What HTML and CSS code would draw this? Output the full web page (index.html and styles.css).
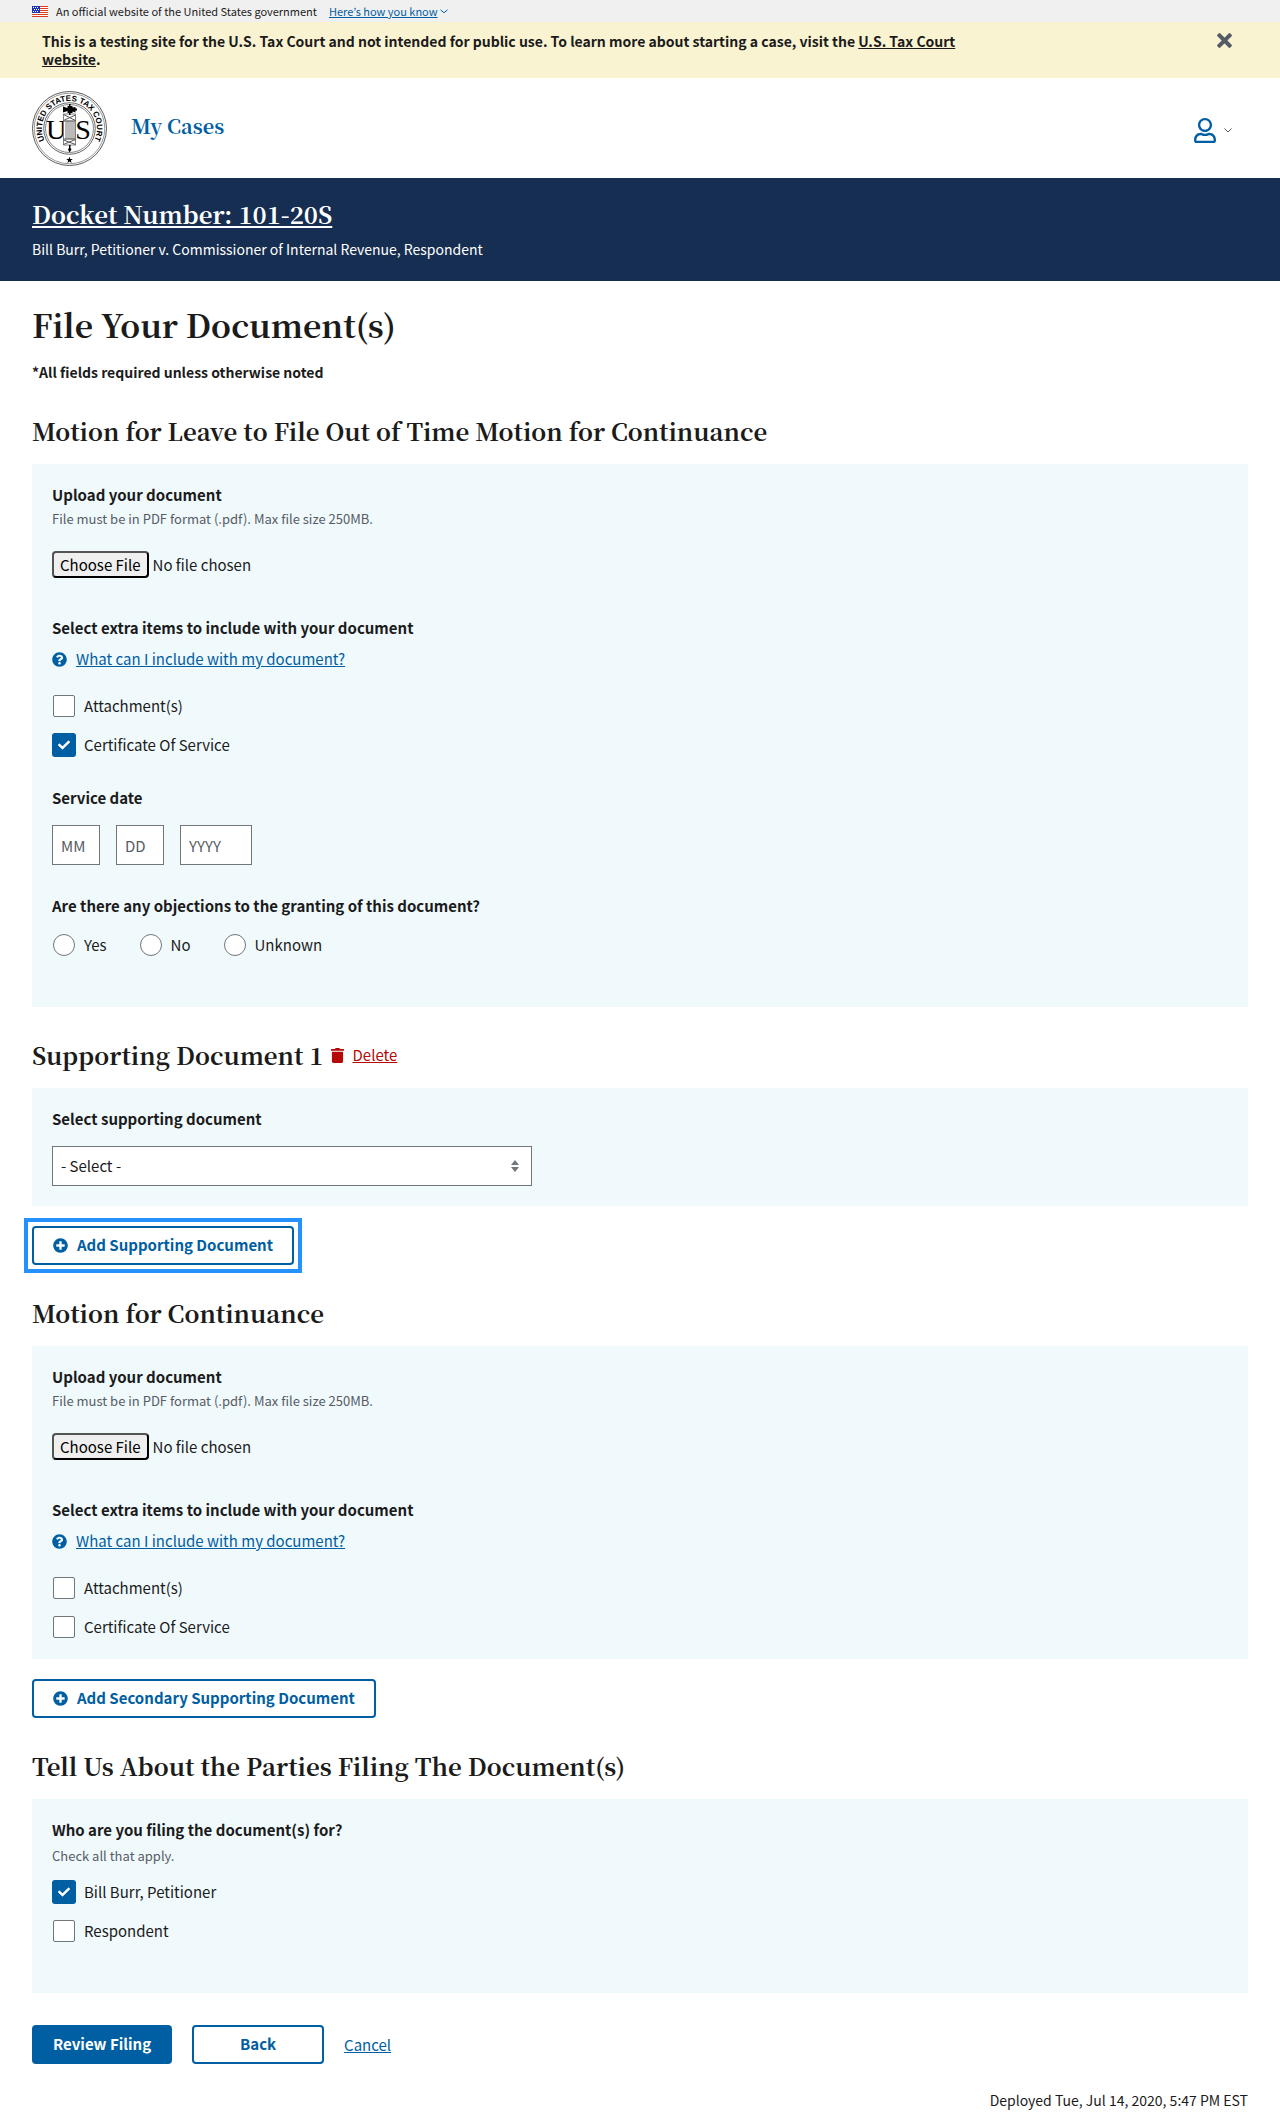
FILE: index.html
```html
<!DOCTYPE html>
<html lang="en">
<head>
<meta charset="utf-8">
<meta name="viewport" content="width=device-width, initial-scale=1">
<title>File Your Document(s) | U.S. Tax Court</title>
<link rel="stylesheet" href="styles.css">
</head>
<body>
<svg class="sprite" aria-hidden="true">
  <symbol id="i-plus" viewBox="0 0 512 512"><path d="M256 8C119 8 8 119 8 256s111 248 248 248 248-111 248-248S393 8 256 8zm144 276c0 6.6-5.4 12-12 12h-92v92c0 6.6-5.4 12-12 12h-56c-6.6 0-12-5.4-12-12v-92h-92c-6.6 0-12-5.4-12-12v-56c0-6.6 5.4-12 12-12h92v-92c0-6.6 5.4-12 12-12h56c6.6 0 12 5.4 12 12v92h92c6.6 0 12 5.4 12 12v56z"/></symbol>
  <symbol id="i-question" viewBox="0 0 512 512"><path d="M504 256c0 136.997-111.043 248-248 248S8 392.997 8 256C8 119.083 119.043 8 256 8s248 111.083 248 248zM262.655 90c-54.497 0-89.255 22.957-116.549 63.758-3.536 5.286-2.353 12.415 2.715 16.258l34.699 26.31c5.205 3.947 12.621 3.008 16.665-2.122 17.864-22.658 30.113-35.797 57.303-35.797 20.429 0 45.698 13.148 45.698 32.958 0 14.976-12.363 22.667-32.534 33.976C247.128 238.528 216 254.941 216 296v4c0 6.627 5.373 12 12 12h56c6.627 0 12-5.373 12-12v-1.333c0-28.462 83.186-29.647 83.186-106.667 0-58.002-60.165-102-116.531-102zM256 338c-25.365 0-46 20.635-46 46 0 25.364 20.635 46 46 46s46-20.636 46-46c0-25.365-20.635-46-46-46z"/></symbol>
</svg>

<div class="gov-banner">
  <svg class="flag" viewBox="0 0 16 11" aria-hidden="true">
    <path fill="#fff" d="M0 0h16v11H0z"/>
    <path fill="#db3e1f" d="M0 0h16v1H0zM0 2h16v1H0zM0 4h16v1H0zM0 6h16v1H0zM0 8h16v1H0zM0 10h16v1H0z"/>
    <path fill="#1e33b1" d="M0 0h8v7H0z"/>
    <path fill="#fff" d="M1 1h1v1H1zM3 1h1v1H3zM5 1h1v1H5zM2 3h1v1H2zM4 3h1v1H4zM6 3h1v1H6zM1 5h1v1H1zM3 5h1v1H3zM5 5h1v1H5z"/>
  </svg>
  <span>An official website of the United States government</span>
  <a class="link gov-link" href="#how">Here’s how you know</a>
  <svg class="gov-chevron" viewBox="0 0 8 5" aria-hidden="true"><path d="M.5.8 4 3.8 7.5.8" fill="none" stroke="currentColor"/></svg>
</div>

<div class="alert">
  <p class="alert-text">This is a testing site for the U.S. Tax Court and not intended for public use. To learn more about starting a case, visit the <a href="#court">U.S. Tax Court website</a>.</p>
  <button class="icon-button close" type="button" aria-label="Close">
    <svg viewBox="0 0 15 15" width="15" height="15"><path d="M2.500 2.500l10 10M12.500 2.500l-10 10" stroke="currentColor" stroke-width="4" stroke-linecap="square"/></svg>
  </button>
</div>

<header class="header">
  <a class="seal" href="#home" aria-label="U.S. Tax Court">
    <svg viewBox="0 0 150 150" width="75" height="75">
      <defs><path id="ring" d="M36.1 113.9A55 55 0 1 1 113.9 113.9"/></defs>
      <g fill="none" stroke="#333">
        <circle cx="75" cy="75" r="74" stroke-width="1.6"/>
        <circle cx="75" cy="75" r="70.500" stroke-width="1"/>
        <circle cx="75" cy="75" r="51.500" stroke-width="1.500"/>
        <circle cx="75" cy="75" r="48" stroke-width="1.200"/>
      </g>
      <text class="seal-ring"><textPath href="#ring" startOffset="50%">UNITED STATES TAX COURT</textPath></text>
      <text class="seal-letter" x="48" y="95">U</text>
      <text class="seal-letter" x="102" y="95">S</text>
      <path fill="#fff" stroke="#555" stroke-width="1.500" d="M63 46h24v62H63z"/>
      <path fill="none" stroke="#777" stroke-width="2" d="M68 59v38M72 59v38M76 59v38M80 59v38M84 59v38"/>
      <path fill="none" stroke="#555" stroke-width="2" d="M63 59l24-11M63 60h24M63 96h24M63 107l24-10M63 47l24 12M63 98l24 9"/>
      <path d="M62 31l9 3v-4h3v-4h3v4h4v3l6-1v3h3v4h-3v4l-6-2v3h-4v4h-3v-4h-3v-4l-9 3zM74 108h3v6l2 3-4 6-3-6 2-3z"/>
      <path d="M75 131.500l1.700 4.600h4.900l-3.900 3 1.500 4.700-4.200-2.800-4.200 2.800 1.500-4.700-3.900-3h4.900z"/>
    </svg>
  </a>
  <nav class="nav"><a class="nav-link" href="#cases">My Cases</a></nav>
  <button class="icon-button account" type="button" aria-label="Account">
    <svg class="user" viewBox="0 0 448 512" width="22" height="25"><path fill="currentColor" d="M313.600 304c-28.700 0-42.500 16-89.600 16-47.100 0-60.800-16-89.600-16C60.200 304 0 364.200 0 438.400V464c0 26.500 21.500 48 48 48h352c26.500 0 48-21.500 48-48v-25.600c0-74.200-60.200-134.400-134.400-134.400zM400 464H48v-25.600c0-47.600 38.800-86.400 86.400-86.400 14.600 0 38.300 16 89.600 16 51.700 0 74.900-16 89.600-16 47.600 0 86.400 38.800 86.400 86.400V464zM224 288c79.500 0 144-64.500 144-144S303.500 0 224 0 80 64.500 80 144s64.500 144 144 144zm0-240c52.900 0 96 43.100 96 96s-43.100 96-96 96-96-43.100-96-96 43.100-96 96-96z"/></svg>
    <svg class="caret" viewBox="0 0 8 5" width="8" height="5"><path d="M.5.5 4 4 7.500.5" fill="none" stroke="currentColor"/></svg>
  </button>
</header>

<section class="docket">
  <a class="docket-number" href="#docket">Docket Number: 101-20S</a>
  <p class="docket-title">Bill Burr, Petitioner v. Commissioner of Internal Revenue, Respondent</p>
</section>

<main>
  <form class="page" onsubmit="return false">
    <h1>File Your Document(s)</h1>
    <p class="note">*All fields required unless otherwise noted</p>

    <h2>Motion for Leave to File Out of Time Motion for Continuance</h2>
    <div class="panel panel-roomy">
      <div class="file-group">
        <label class="label" for="file-1">Upload your document</label>
        <p class="hint">File must be in PDF format (.pdf). Max file size 250MB.</p>
        <input class="file" id="file-1" type="file" accept=".pdf">
      </div>
      <fieldset>
        <legend class="label">Select extra items to include with your document</legend>
        <a class="link help" href="#include"><svg class="icon" aria-hidden="true"><use href="#i-question"/></svg><span>What can I include with my document?</span></a>
        <div class="checks">
          <label class="check"><input type="checkbox"><span>Attachment(s)</span></label>
          <label class="check"><input type="checkbox" checked><span>Certificate Of Service</span></label>
        </div>
      </fieldset>
      <fieldset class="group">
        <legend class="label">Service date</legend>
        <div class="date">
          <input class="field short" type="text" placeholder="MM" aria-label="Month">
          <input class="field short" type="text" placeholder="DD" aria-label="Day">
          <input class="field long" type="text" placeholder="YYYY" aria-label="Year">
        </div>
      </fieldset>
      <fieldset class="group">
        <legend class="label">Are there any objections to the granting of this document?</legend>
        <div class="radios">
          <label class="check"><input type="radio" name="objections"><span>Yes</span></label>
          <label class="check"><input type="radio" name="objections"><span>No</span></label>
          <label class="check"><input type="radio" name="objections"><span>Unknown</span></label>
        </div>
      </fieldset>
    </div>

    <div class="heading-row">
      <h2>Supporting Document 1</h2>
      <button class="delete" type="button"><svg viewBox="0 0 448 512" width="13" height="15" aria-hidden="true"><path fill="currentColor" d="M32 464a48 48 0 0 0 48 48h288a48 48 0 0 0 48-48V128H32zM432 32H312l-9.400-18.700A24 24 0 0 0 281.100 0H166.800a23.720 23.720 0 0 0-21.400 13.300L136 32H16A16 16 0 0 0 0 48v32a16 16 0 0 0 16 16h416a16 16 0 0 0 16-16V48a16 16 0 0 0-16-16z"/></svg><span>Delete</span></button>
    </div>
    <div class="panel">
      <label class="label" for="supporting">Select supporting document</label>
      <select class="field select" id="supporting"><option>- Select -</option></select>
    </div>
    <button class="button outline focused" type="button"><svg class="icon" aria-hidden="true"><use href="#i-plus"/></svg>Add Supporting Document</button>

    <h2>Motion for Continuance</h2>
    <div class="panel">
      <div class="file-group">
        <label class="label" for="file-2">Upload your document</label>
        <p class="hint">File must be in PDF format (.pdf). Max file size 250MB.</p>
        <input class="file" id="file-2" type="file" accept=".pdf">
      </div>
      <fieldset>
        <legend class="label">Select extra items to include with your document</legend>
        <a class="link help" href="#include"><svg class="icon" aria-hidden="true"><use href="#i-question"/></svg><span>What can I include with my document?</span></a>
        <div class="checks">
          <label class="check"><input type="checkbox"><span>Attachment(s)</span></label>
          <label class="check"><input type="checkbox"><span>Certificate Of Service</span></label>
        </div>
      </fieldset>
    </div>
    <button class="button outline" type="button"><svg class="icon" aria-hidden="true"><use href="#i-plus"/></svg>Add Secondary Supporting Document</button>

    <h2>Tell Us About the Parties Filing The Document(s)</h2>
    <div class="panel panel-roomy">
      <fieldset class="parties">
        <legend class="label">Who are you filing the document(s) for?</legend>
        <p class="hint">Check all that apply.</p>
        <div class="checks">
          <label class="check"><input type="checkbox" checked><span>Bill Burr, Petitioner</span></label>
          <label class="check"><input type="checkbox"><span>Respondent</span></label>
        </div>
      </fieldset>
    </div>

    <div class="actions">
      <button class="button solid" type="submit">Review Filing</button>
      <button class="button outline back" type="button">Back</button>
      <a class="link" href="#cancel">Cancel</a>
    </div>
  </form>
</main>

<footer class="footer">Deployed Tue, Jul 14, 2020, 5:47 PM EST</footer>
</body>
</html>
```
FILE: styles.css
```css
:root {
  --blue: #005ea2;
  --navy: #162e51;
  --ink: #1b1b1b;
  --grey: #565c65;
  --line: #71767a;
  --red: #b50909;
  --pale: #f0f9fc;
  --sans: "Noto Sans CJK JP", "Noto Sans CJK SC", "Open Sans", sans-serif;
  --serif: "Noto Serif CJK JP", "Liberation Serif", serif;
}

* { box-sizing: border-box; }

body {
  margin: 0;
  background: #fff;
  color: var(--ink);
  font: 15px/22px var(--sans);
}

p, h1, h2, fieldset, legend { margin: 0; padding: 0; }
fieldset { border: 0; min-width: 0; }
button, input, select { font: inherit; }
svg { display: block; flex: none; }

.sprite { position: absolute; width: 0; height: 0; }
.icon { width: 15px; height: 15px; fill: currentColor; }
.link { color: var(--blue); }
.icon-button { padding: 0; border: 0; background: none; cursor: pointer; }

/* Government banner */
.gov-banner {
  display: flex;
  align-items: center;
  height: 22px;
  padding: 0 32px;
  background: #f0f0f0;
  font-size: 11px;
}
.flag { width: 16px; height: 11px; margin-right: 8px; }
.gov-link { margin: 0 2px 0 12px; }
.gov-chevron { width: 8px; height: 5px; color: var(--blue); }

/* Test site alert */
.alert {
  display: flex;
  justify-content: space-between;
  align-items: flex-start;
  padding: 10px 48px 10px 42px;
  background: #faf3d1;
}
.alert-text {
  max-width: 940px;
  font-size: 14px;
  font-weight: 700;
  line-height: 18px;
}
.alert-text a { color: inherit; }
.close { margin-top: 1px; color: var(--grey); }

/* Site header */
.header {
  display: flex;
  align-items: center;
  height: 100px;
  padding: 0 48px 0 32px;
}
.seal { color: #000; }
.seal-ring {
  font: 700 16px "Liberation Sans", sans-serif;
  text-anchor: middle;
}
.seal-letter {
  font: 56px "Liberation Serif", serif;
  text-anchor: middle;
}
.nav { flex: 1; margin: 0 24px 4px; }
.nav-link {
  color: var(--blue);
  font: 700 20px/28px var(--serif);
  text-decoration: none;
}
.account { display: flex; align-items: center; gap: 8px; margin-top: 5px; color: var(--blue); }
.caret { color: var(--grey); }

/* Case band */
.docket {
  padding: 19px 32px 21px;
  background: var(--navy);
  color: #fff;
}
.docket-number {
  display: inline-block;
  color: inherit;
  font: 700 24px/34px var(--serif);
}
.docket-title { margin-top: 7px; font-size: 14px; }

/* Form */
.page { padding: 23px 32px 0; }
h1 { font: 700 32px/40px var(--serif); }
h2 { margin: 32px 0 17px; font: 700 24px/32px var(--serif); }
.note { margin-top: 17px; font-size: 14px; font-weight: 700; }

.panel { padding: 20px; background: var(--pale); }
.panel-roomy { padding-bottom: 50px; }

.label { display: block; font-weight: 700; }
.hint { margin-top: 2px; color: var(--grey); font-size: 13px; }

.file-group { margin-bottom: 39px; }
.file { display: block; height: 27px; margin-top: 21px; line-height: 22px; }
.file::file-selector-button {
  height: 27px;
  margin: 0 4px 0 0;
  padding: 0 6px;
  border: 2px outset #000;
  border-radius: 4px;
  background: #efefef;
  color: #000;
  font: inherit;
}

.help { display: flex; align-items: center; gap: 9px; width: fit-content; margin-top: 9px; text-decoration: none; }
.help span { text-decoration: underline; }

.checks { display: grid; gap: 15px; justify-items: start; margin-top: 24px; }
.parties .hint { margin-top: 4px; }
.parties .checks { margin-top: 13px; }
.radios { display: flex; gap: 32px; margin-top: 16px; }
.check { display: flex; align-items: center; gap: 8px; height: 24px; }
.check input {
  appearance: none;
  width: 22px;
  height: 22px;
  margin: 1px;
  border: 1px solid var(--line);
  border-radius: 2px;
  background: #fff;
}
.check input[type="radio"] { border-radius: 50%; }
.check input:checked {
  border-color: var(--blue);
  box-shadow: 0 0 0 1px var(--blue);
  background: var(--blue) url("data:image/svg+xml,%3Csvg xmlns='http://www.w3.org/2000/svg' viewBox='0 0 512 512'%3E%3Cpath fill='%23fff' d='M173.898 439.404l-166.400-166.400c-9.997-9.997-9.997-26.206 0-36.204l36.203-36.204c9.997-9.998 26.207-9.998 36.204 0L192 312.690 432.095 72.596c9.997-9.997 26.207-9.997 36.204 0l36.203 36.204c9.997 9.997 9.997 26.206 0 36.204l-294.400 294.401c-9.998 9.997-26.207 9.997-36.204-.001z'/%3E%3C/svg%3E") center / 12px no-repeat;
}

.group { margin-top: 30px; }
.date { display: flex; gap: 16px; margin-top: 16px; }
.field {
  height: 40px;
  padding: 0 8px;
  border: 1px solid var(--line);
  border-radius: 0;
  background: #fff;
  color: var(--ink);
}
.field::placeholder { color: var(--grey); opacity: 1; }
.short { width: 48px; }
.long { width: 72px; }
.select {
  display: block;
  appearance: none;
  width: 100%;
  max-width: 480px;
  margin-top: 16px;
  background: #fff url("data:image/svg+xml,%3Csvg xmlns='http://www.w3.org/2000/svg' viewBox='0 0 8 12'%3E%3Cpath fill='%2371767a' d='M4 0l4 5H0zM0 7h8l-4 5z'/%3E%3C/svg%3E") right 12px center / 8px 12px no-repeat;
}

.heading-row { display: flex; align-items: center; gap: 7px; margin: 32px 0 17px; }
.heading-row h2 { margin: 0; }
.delete {
  display: flex;
  align-items: center;
  gap: 9px;
  padding: 0;
  border: 0;
  background: none;
  color: var(--red);
}
.delete span { text-decoration: underline; }

.button {
  display: flex;
  align-items: center;
  justify-content: center;
  gap: 9px;
  height: 39px;
  padding: 0 19px 1px;
  border: 2px solid var(--blue);
  border-radius: 4px;
  font-weight: 700;
}
.outline { background: #fff; color: var(--blue); }
.solid { background: var(--blue); color: #fff; }
.focused { position: relative; outline: 0; }
.focused::after {
  content: "";
  position: absolute;
  inset: -10px;
  border: 4px solid #2491ff;
  pointer-events: none;
}
.panel + .button { margin-top: 20px; }
.actions { display: flex; align-items: center; gap: 20px; margin-top: 32px; }
.back { min-width: 132px; }

.footer { padding: 25px 32px 17px; font-size: 14px; text-align: right; }
```
